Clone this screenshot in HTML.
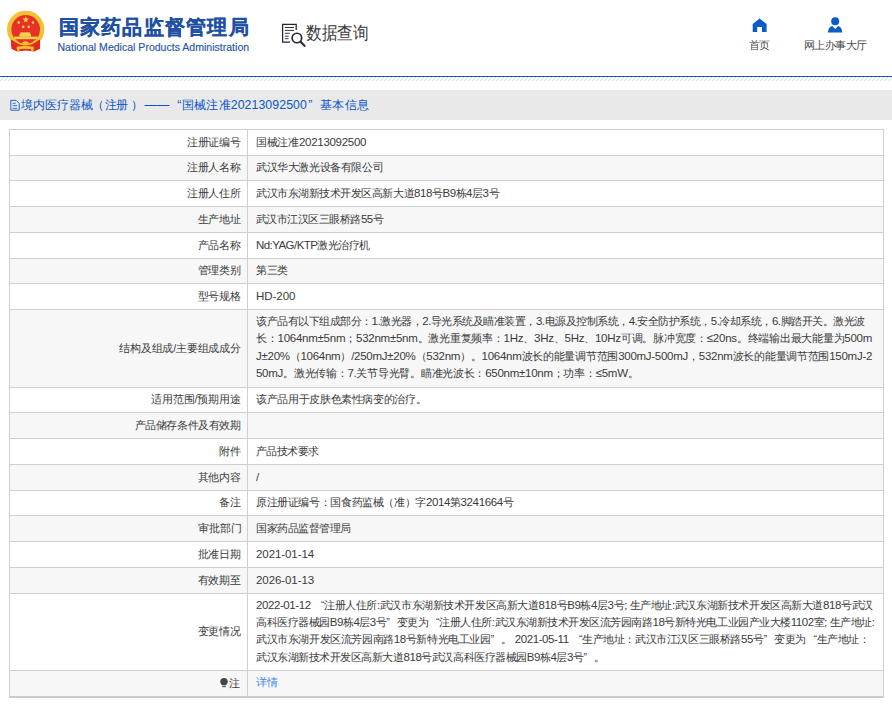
<!DOCTYPE html>
<html><head><meta charset="utf-8">
<style>
*{margin:0;padding:0;box-sizing:border-box}
html,body{width:892px;height:706px;overflow:hidden;background:#fff;font-family:"Liberation Sans",sans-serif;}
.abs{position:absolute;white-space:nowrap}
#title{font-size:19.8px;line-height:26px;font-weight:bold;color:#1e50a2;-webkit-text-stroke:0.2px #1e50a2}
#en{font-size:10.5px;line-height:12px;color:#2456a6;-webkit-text-stroke:0.15px #2456a6}
#sq{font-size:18px;line-height:22px;color:#3a3a3a;transform:scaleX(0.87);transform-origin:0 0}
.nav{font-size:11px;line-height:14px;color:#484848}
.cr{font-size:12.3px;line-height:15px;color:#0a55c8}
.lab{font-size:10.6px;line-height:15px;color:#3a3a3a}
.lab.r{left:0;width:241px;text-align:right}
.vt{font-size:10.6px;line-height:15px;color:#3a3a3a}
.link{color:#3a88e6;font-size:11.4px}
.la{font-size:11.5px}
.ql{display:inline-block;width:1em;text-align:right}
.qr{display:inline-block;width:1em;text-align:left}
</style></head><body>
<svg class="abs" style="left:0;top:0" width="60" height="60" viewBox="0 0 60 60">
  <circle cx="25.7" cy="29.4" r="18.7" fill="#f4c233"/>
  <circle cx="25.7" cy="29.4" r="14.3" fill="#e8302a"/>
  <path d="M10.6 39.6 Q25.7 47 40.4 39.6 L40 48.8 L34.5 51.4 L25.7 50.6 L17 51.4 L11.3 48.8 Z" fill="#e42a1f"/>
  <path d="M5 39.8 L10.7 39.8 L11.2 49.5 L5 49.5 Z M46.4 39.8 L40.5 39.8 L40.1 49.5 L46.4 49.5 Z" fill="#fff"/>
  <path d="M12.2 38.6 Q25.5 51 38.8 38.6" fill="none" stroke="#f4c233" stroke-width="1.5"/>
  <rect x="14.1" y="36.6" width="23.5" height="2.6" fill="#f6cf45"/>
  <rect x="19.3" y="34" width="11.7" height="2.7" fill="#f6d354"/>
  <rect x="20.3" y="32.4" width="9.8" height="1.7" fill="#f6d354"/>
  <ellipse cx="25.4" cy="43.2" rx="3.2" ry="1.9" fill="#f4c233"/>
  <path d="M16.8 46.7 Q25.5 45.4 33.8 46.7 L33.8 49.2 Q25.5 48.2 16.8 49.2 Z" fill="#f4c233"/>
  <rect x="17.2" y="48" width="2.3" height="3" fill="#f4c233"/>
  <rect x="31.2" y="48" width="2.3" height="3" fill="#f4c233"/>
  <polygon points="25.8,16.1 26.65,18.55 29.2,18.6 27.15,20.15 27.9,22.6 25.8,21.15 23.7,22.6 24.45,20.15 22.4,18.6 24.95,18.55" fill="#f4cf3e"/>
  <circle cx="18.7" cy="22.6" r="1.3" fill="#f4cf3e"/>
  <circle cx="33" cy="22.6" r="1.3" fill="#f4cf3e"/>
  <circle cx="23.2" cy="26.9" r="1.3" fill="#f4cf3e"/>
  <circle cx="28.8" cy="26.9" r="1.3" fill="#f4cf3e"/>
</svg>
<div id="title" class="abs" style="left:58.5px;top:14px;letter-spacing:1.275px">国家药品监督管理局</div>
<div id="en" class="abs" style="left:57.5px;top:41px;letter-spacing:0.019px">National Medical Products Administration</div>

<svg class="abs" style="left:276px;top:16px" width="34" height="36" viewBox="276 16 34 36">
  <path d="M290 42 H282.6 V24.3 H296.2 V30" fill="none" stroke="#262637" stroke-width="1.25"/>
  <path d="M284.8 27.5 H294 M284.8 30.4 H294 M284.8 33.3 H289.8 M284.8 36.2 H288.5 M284.8 38.7 H288.5" stroke="#2a2a3a" stroke-width="0.95"/>
  <circle cx="296.9" cy="38" r="4.75" fill="none" stroke="#262637" stroke-width="1.7"/>
  <path d="M300.6 41.7 L304.6 45.9" stroke="#262637" stroke-width="2.1" stroke-linecap="round"/>
</svg>
<div id="sq" class="abs" style="left:305.5px;top:21.5px;letter-spacing:0px">数据查询</div>

<svg class="abs" style="left:750px;top:16px" width="20" height="20" viewBox="750 16 20 20">
  <path d="M759.6 18.5 L766.6 24 V32 H762 V27 H757.2 V32 H752.7 V24 Z" fill="#0b5cc6"/>
</svg>
<div id="nav1" class="abs nav" style="left:749px;top:38px;letter-spacing:-0.900px">首页</div>
<svg class="abs" style="left:825px;top:15px" width="20" height="20" viewBox="825 15 20 20">
  <circle cx="835.2" cy="21.2" r="4" fill="#0b5cc6"/>
  <path d="M827.8 32.4 Q828.5 27 832.3 26 L835.2 29 L838.1 26 Q841.8 27 842.3 32.4 Z" fill="#0b5cc6"/>
</svg>
<div id="nav2" class="abs nav" style="left:804px;top:38px;letter-spacing:-0.620px">网上办事大厅</div>

<div class="abs" style="left:0;top:76px;width:892px;height:1px;background:#0a58c2"></div>
<svg class="abs" style="left:0;top:77px" width="892" height="4"><defs><pattern id="hp" width="4" height="4" patternUnits="userSpaceOnUse"><path d="M-1 5 L5 -1" stroke="#e2e2e2" stroke-width="1.1"/></pattern></defs><rect width="892" height="4" fill="url(#hp)"/></svg>
<div class="abs" style="left:0;top:90px;width:892px;height:30px;background:#e9e9e9"></div>
<svg class="abs" style="left:8px;top:96px" width="14" height="18" viewBox="8 96 14 18">
  <path d="M10.8 100.4 H16.2 L19.2 103.4 V110.2 H10.8 Z" fill="none" stroke="#1a5fc8" stroke-width="0.95" stroke-linejoin="miter"/>
  <path d="M12.7 103.3 H15.7 M12.7 105.6 H17.1 M12.7 108.3 H17.1" stroke="#1a5fc8" stroke-width="0.85"/>
</svg>
<div class="abs cr" style="left:20.7px;top:98px">境内医疗器械</div><div class="abs cr" style="left:92.3px;top:98px">（</div><div class="abs cr" style="left:105px;top:98px;letter-spacing:-0.9px">注册</div><div class="abs cr" style="left:131px;top:98px">）</div>
<div class="abs cr" style="left:144.6px;top:98px">——</div>
<div class="abs cr" style="left:177.3px;top:98px">“</div>
<div id="cr2" class="abs cr" style="left:182.3px;top:98px;letter-spacing:0.098px">国械注准20213092500</div>
<div class="abs cr" style="left:308.2px;top:98px">”</div>
<div id="cr3" class="abs cr" style="left:319.8px;top:98px;letter-spacing:0.500px">基本信息</div>
<div class="abs" style="left:9px;top:129px;width:875px;height:569px;border:1px solid #d0cfd0;border-bottom:2px solid #cdcbcd;background:#fff"></div>
<div class="abs" style="left:10px;top:156px;width:873px;height:24px;background:#f7f7f7"></div>
<div class="abs" style="left:10px;top:155px;width:873px;height:1px;background:#d0cfd0"></div>
<div class="abs" style="left:10px;top:180px;width:873px;height:1px;background:#d0cfd0"></div>
<div class="abs" style="left:10px;top:207px;width:873px;height:25px;background:#f7f7f7"></div>
<div class="abs" style="left:10px;top:206px;width:873px;height:1px;background:#d0cfd0"></div>
<div class="abs" style="left:10px;top:232px;width:873px;height:1px;background:#d0cfd0"></div>
<div class="abs" style="left:10px;top:259px;width:873px;height:24px;background:#f7f7f7"></div>
<div class="abs" style="left:10px;top:258px;width:873px;height:1px;background:#d0cfd0"></div>
<div class="abs" style="left:10px;top:283px;width:873px;height:1px;background:#d0cfd0"></div>
<div class="abs" style="left:10px;top:310px;width:873px;height:77px;background:#f7f7f7"></div>
<div class="abs" style="left:10px;top:309px;width:873px;height:1px;background:#d0cfd0"></div>
<div class="abs" style="left:10px;top:387px;width:873px;height:1px;background:#d0cfd0"></div>
<div class="abs" style="left:10px;top:413px;width:873px;height:25px;background:#f7f7f7"></div>
<div class="abs" style="left:10px;top:412px;width:873px;height:1px;background:#d0cfd0"></div>
<div class="abs" style="left:10px;top:438px;width:873px;height:1px;background:#d0cfd0"></div>
<div class="abs" style="left:10px;top:465px;width:873px;height:25px;background:#f7f7f7"></div>
<div class="abs" style="left:10px;top:464px;width:873px;height:1px;background:#d0cfd0"></div>
<div class="abs" style="left:10px;top:490px;width:873px;height:1px;background:#d0cfd0"></div>
<div class="abs" style="left:10px;top:516px;width:873px;height:25px;background:#f7f7f7"></div>
<div class="abs" style="left:10px;top:515px;width:873px;height:1px;background:#d0cfd0"></div>
<div class="abs" style="left:10px;top:541px;width:873px;height:1px;background:#d0cfd0"></div>
<div class="abs" style="left:10px;top:568px;width:873px;height:25px;background:#f7f7f7"></div>
<div class="abs" style="left:10px;top:567px;width:873px;height:1px;background:#d0cfd0"></div>
<div class="abs" style="left:10px;top:593px;width:873px;height:1px;background:#d0cfd0"></div>
<div class="abs" style="left:10px;top:671px;width:873px;height:25px;background:#f7f7f7"></div>
<div class="abs" style="left:10px;top:670px;width:873px;height:1px;background:#d0cfd0"></div>
<div id="lab0" class="abs lab" style="left:186.79999999999998px;top:134.50px;letter-spacing:-0.225px">注册证编号</div>
<div id="v0" class="abs vt" style="left:256px;top:134.50px;letter-spacing:-0.276px">国械注准<span class="la">20213092500</span></div>
<div id="lab1" class="abs lab" style="left:186.79999999999998px;top:160.00px;letter-spacing:-0.225px">注册人名称</div>
<div id="v1" class="abs vt" style="left:256px;top:160.00px;letter-spacing:-0.391px">武汉华大激光设备有限公司</div>
<div id="lab2" class="abs lab" style="left:186.79999999999998px;top:185.50px;letter-spacing:-0.225px">注册人住所</div>
<div id="v2" class="abs vt" style="left:256px;top:185.50px;letter-spacing:-0.463px">武汉市东湖新技术开发区高新大道<span class="la">818</span>号<span class="la">B9</span>栋<span class="la">4</span>层<span class="la">3</span>号</div>
<div id="lab3" class="abs lab" style="left:197.79999999999998px;top:211.50px;letter-spacing:-0.300px">生产地址</div>
<div id="v3" class="abs vt" style="left:256px;top:211.50px;letter-spacing:-0.508px">武汉市江汉区三眼桥路<span class="la">55</span>号</div>
<div id="lab4" class="abs lab" style="left:197.79999999999998px;top:237.50px;letter-spacing:-0.300px">产品名称</div>
<div id="v4" class="abs vt" style="left:256px;top:237.50px;letter-spacing:-0.556px"><span class="la">Nd:YAG/KTP</span>激光治疗机</div>
<div id="lab5" class="abs lab" style="left:197.79999999999998px;top:263.00px;letter-spacing:-0.300px">管理类别</div>
<div id="v5" class="abs vt" style="left:256px;top:263.00px;letter-spacing:-0.350px">第三类</div>
<div id="lab6" class="abs lab" style="left:197.79999999999998px;top:288.50px;letter-spacing:-0.300px">型号规格</div>
<div id="v6" class="abs vt" style="left:256px;top:288.50px;letter-spacing:-0.028px"><span class="la">HD-200</span></div>
<div id="lab7" class="abs lab" style="left:119.3px;top:340.50px;letter-spacing:-0.214px">结构及组成/主要组成成分</div>
<div id="v7_0" class="abs vt" style="left:256px;top:314.15px;letter-spacing:-0.492px">该产品有以下组成部分：<span class="la">1.</span>激光器，<span class="la">2.</span>导光系统及瞄准装置，<span class="la">3.</span>电源及控制系统，<span class="la">4.</span>安全防护系统，<span class="la">5.</span>冷却系统，<span class="la">6.</span>脚踏开关。激光波</div>
<div id="v7_1" class="abs vt" style="left:256px;top:331.45px;letter-spacing:-0.251px">长：<span class="la">1064nm±5nm</span>；<span class="la">532nm±5nm</span>。激光重复频率：<span class="la">1Hz</span>、<span class="la">3Hz</span>、<span class="la">5Hz</span>、<span class="la">10Hz</span>可调。脉冲宽度：<span class="la">≤20ns</span>。终端输出最大能量为<span class="la">500m</span></div>
<div id="v7_2" class="abs vt" style="left:256px;top:348.75px;letter-spacing:-0.268px"><span class="la">J±20%</span>（<span class="la">1064nm</span>）<span class="la">/250mJ±20%</span>（<span class="la">532nm</span>）。<span class="la">1064nm</span>波长的能量调节范围<span class="la">300mJ-500mJ</span>，<span class="la">532nm</span>波长的能量调节范围<span class="la">150mJ-2</span></div>
<div id="v7_3" class="abs vt" style="left:256px;top:366.05px;letter-spacing:-0.272px"><span class="la">50mJ</span>。激光传输：<span class="la">7.</span>关节导光臂。瞄准光波长：<span class="la">650nm±10nm</span>；功率：<span class="la">≤5mW</span>。</div>
<div id="lab8" class="abs lab" style="left:151.2px;top:392.00px;letter-spacing:-0.157px">适用范围/预期用途</div>
<div id="v8" class="abs vt" style="left:256px;top:392.00px;letter-spacing:-0.353px">该产品用于皮肤色素性病变的治疗。</div>
<div id="lab9" class="abs lab" style="left:134.7px;top:417.50px;letter-spacing:-0.422px">产品储存条件及有效期</div>
<div id="lab10" class="abs lab" style="left:218.5px;top:443.50px;letter-spacing:0.400px">附件</div>
<div id="v10" class="abs vt" style="left:256px;top:443.50px;letter-spacing:-0.580px">产品技术要求</div>
<div id="lab11" class="abs lab" style="left:197.79999999999998px;top:469.50px;letter-spacing:-0.300px">其他内容</div>
<div id="v11" class="abs vt" style="left:256px;top:469.50px;letter-spacing:0.000px"><span class="la">/</span></div>
<div id="lab12" class="abs lab" style="left:218.5px;top:495.00px;letter-spacing:0.400px">备注</div>
<div id="v12" class="abs vt" style="left:256px;top:495.00px;letter-spacing:-0.381px">原注册证编号：国食药监械（准）字<span class="la">2014</span>第<span class="la">3241664</span>号</div>
<div id="lab13" class="abs lab" style="left:197.79999999999998px;top:520.50px;letter-spacing:0.033px">审批部门</div>
<div id="v13" class="abs vt" style="left:256px;top:520.50px;letter-spacing:-0.487px">国家药品监督管理局</div>
<div id="lab14" class="abs lab" style="left:197.79999999999998px;top:546.50px;letter-spacing:-0.300px">批准日期</div>
<div id="v14" class="abs vt" style="left:256px;top:546.50px;letter-spacing:-0.081px"><span class="la">2021-01-14</span></div>
<div id="lab15" class="abs lab" style="left:197.79999999999998px;top:572.50px;letter-spacing:-0.300px">有效期至</div>
<div id="v15" class="abs vt" style="left:256px;top:572.50px;letter-spacing:-0.081px"><span class="la">2026-01-13</span></div>
<div id="lab16" class="abs lab" style="left:197.79999999999998px;top:624.00px;letter-spacing:-0.300px">变更情况</div>
<div id="v16_0" class="abs vt" style="left:256px;top:597.65px;letter-spacing:-0.414px"><span class="la">2022-01-12 </span><span class="ql">“</span>注册人住所<span class="la">:</span>武汉市东湖新技术开发区高新大道<span class="la">818</span>号<span class="la">B9</span>栋<span class="la">4</span>层<span class="la">3</span>号<span class="la">; </span>生产地址<span class="la">:</span>武汉东湖新技术开发区高新大道<span class="la">818</span>号武汉</div>
<div id="v16_1" class="abs vt" style="left:256px;top:614.95px;letter-spacing:-0.469px">高科医疗器械园<span class="la">B9</span>栋<span class="la">4</span>层<span class="la">3</span>号<span class="qr">”</span>变更为<span class="ql">“</span>注册人住所<span class="la">:</span>武汉东湖新技术开发区流芳园南路<span class="la">18</span>号新特光电工业园产业大楼<span class="la">1102</span>室<span class="la">; </span>生产地址<span class="la">:</span></div>
<div id="v16_2" class="abs vt" style="left:256px;top:632.25px;letter-spacing:-0.398px">武汉市东湖开发区流芳园南路<span class="la">18</span>号新特光电工业园<span class="qr">”</span>。<span class="la"> 2021-05-11 </span><span class="ql">“</span>生产地址：武汉市江汉区三眼桥路<span class="la">55</span>号<span class="qr">”</span>变更为<span class="ql">“</span>生产地址：</div>
<div id="v16_3" class="abs vt" style="left:256px;top:649.55px;letter-spacing:-0.462px">武汉东湖新技术开发区高新大道<span class="la">818</span>号武汉高科医疗器械园<span class="la">B9</span>栋<span class="la">4</span>层<span class="la">3</span>号<span class="qr">”</span>。</div>
<svg class="abs" style="left:219px;top:677px" width="10" height="12" viewBox="0 0 10 12"><path d="M5 1 C2.6 1 1.2 2.7 1.2 4.6 C1.2 6.2 2.3 7.1 2.9 8.2 L7.1 8.2 C7.7 7.1 8.8 6.2 8.8 4.6 C8.8 2.7 7.4 1 5 1 Z" fill="#454545"/><rect x="3.2" y="8.8" width="3.6" height="1.4" rx="0.5" fill="#666"/></svg>
<div id="lab_last" class="abs lab" style="left:229px;top:675.50px;letter-spacing:0.000px">注</div>
<div id="v_last" class="abs vt link" style="left:256px;top:674.50px;letter-spacing:0.000px">详情</div>
<div class="abs" style="left:247px;top:129px;width:1px;height:568px;background:#d0cfd0"></div>
</body></html>
